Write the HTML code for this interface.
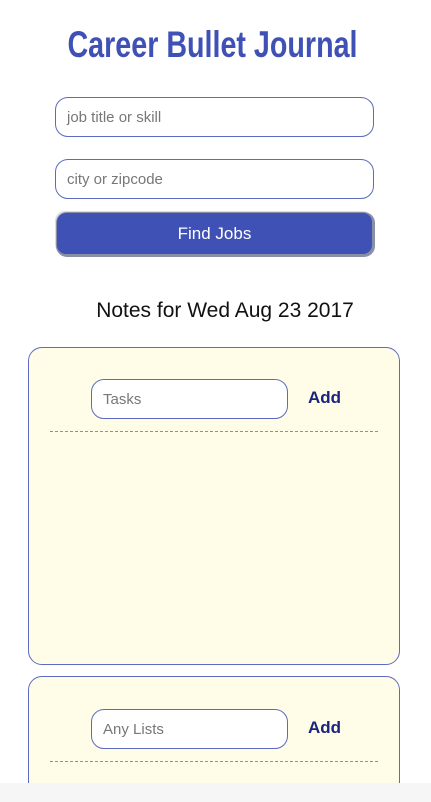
<!DOCTYPE html>
<html><head><style>
html,body{margin:0;width:431px;height:802px;overflow:hidden}
body{background:#fff;font-family:"Liberation Sans",sans-serif;position:relative}
.a{position:absolute}
h1{position:absolute;left:-3px;width:431px;top:24px;margin:0;text-align:center;font-size:37px;font-weight:bold;color:#3f51b5;transform:scaleX(0.775);letter-spacing:0}
.inp{position:absolute;box-sizing:border-box;border:1px solid #5c6bc0;border-radius:13px;background:#fff;color:#777;font-size:15px;padding-left:11px;display:flex;align-items:center}
.btn{left:57px;top:213px;width:315px;height:41px;background:#3f51b5;border-radius:9px;color:#fff;font-size:17px;text-align:center;line-height:41px;box-shadow:1px 1px 0 2px #8a8fa8,-1px -1px 0 1px #d8dbe8}
.card{position:absolute;left:28px;width:372px;box-sizing:border-box;border:1px solid #5c6bc0;border-radius:14px;background:#fffde8}
.add{position:absolute;left:308px;font-size:17px;font-weight:bold;color:#1a237e}
.dash{position:absolute;left:50px;width:328px;border-top:1px dashed #8a8fb0}
</style></head><body>
<h1>Career Bullet Journal</h1>
<div class="inp" style="left:55px;top:97px;width:319px;height:40px">job title or skill</div>
<div class="inp" style="left:55px;top:159px;width:319px;height:40px">city or zipcode</div>
<div class="a btn">Find Jobs</div>
<div class="a" style="left:0;width:450px;text-align:center;top:299px;font-size:21px;color:#111">Notes for Wed Aug 23 2017</div>
<div class="card" style="top:347px;height:318px"></div>
<div class="inp" style="left:91px;top:379px;width:197px;height:40px">Tasks</div>
<div class="add" style="top:388px">Add</div>
<div class="dash" style="top:431px"></div>
<div class="card" style="top:676px;height:140px"></div>
<div class="inp" style="left:91px;top:709px;width:197px;height:40px">Any Lists</div>
<div class="add" style="top:718px">Add</div>
<div class="dash" style="top:761px"></div>
<div class="a" style="left:0;top:783px;width:431px;height:19px;background:#f6f6f6"></div>
</body></html>
